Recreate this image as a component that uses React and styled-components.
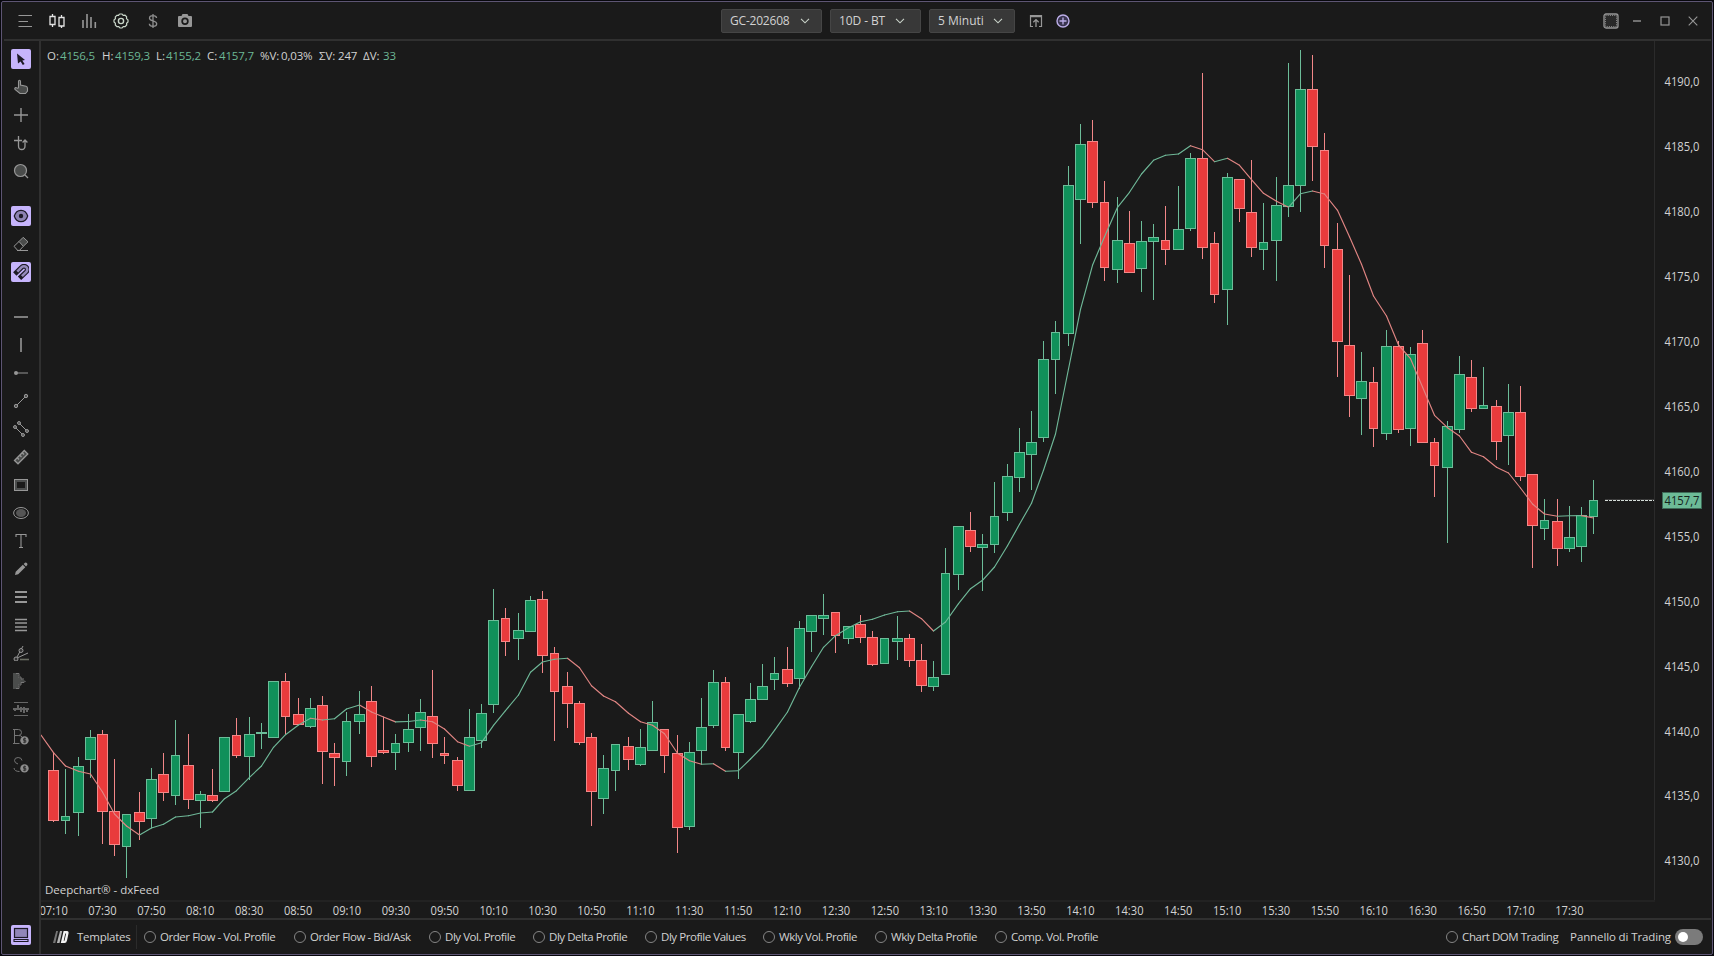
import React from "react";
import styled, { createGlobalStyle, css } from "styled-components";

const FONT = '"Open Sans", "Noto Sans", sans-serif';
const C = {
  bg: "#1a1a1a",
  line: "#303030",
  text: "#d2d2d2",
  icon: "#979797",
  accent: "#c6b4fc",
  up: "#10905a",
  upEdge: "#6cbd99",
  down: "#e93b3c",
  downEdge: "#f38788",
  maUp: "#6fb898",
  maDown: "#e08583",
};

const Global = createGlobalStyle`
  *, *::before, *::after { box-sizing: border-box; }
  html, body { margin: 0; padding: 0; background: #07070c; overflow: hidden; }
  button { font: inherit; color: inherit; border: 0; background: none; padding: 0; }
`;

const Window = styled.div`
  width: 1712px;
  height: 954px;
  margin: 1px 0 0 1px;
  border: 1px solid #5d5573;
  border-radius: 2px;
  background: ${C.bg};
  color: ${C.text};
  font-family: ${FONT};
  font-size: 11.5px;
  line-height: 16px;
  display: flex;
  flex-direction: column;
  white-space: nowrap;
`;

const TopBar = styled.header`
  flex: none;
  height: 39px;
  margin: 0 1px 0 2px;
  padding-left: 5px;
  border-bottom: 2px solid ${C.line};
  display: grid;
  grid-template-columns: 712px 1fr 112px;
  align-items: center;
`;
const ToolGroup = styled.div`
  display: flex;
  align-items: center;
`;
const TopButton = styled.button`
  width: ${(p) => p.$w || 32}px;
  height: 28px;
  display: flex;
  align-items: center;
  justify-content: center;
  color: ${(p) => p.$color || C.icon};
`;
const Select = styled.button`
  width: ${(p) => p.$w}px;
  height: 24px;
  margin-right: ${(p) => p.$gap ?? 8}px;
  padding: 0 ${(p) => p.$right}px 0 8px;
  background: #383838;
  border: 1px solid #454545;
  border-radius: 2px;
  font-size: 12px;
  display: flex;
  align-items: center;
  justify-content: space-between;
  color: ${C.text};
  letter-spacing: ${(p) => p.$track || 0}px;
`;

const Body = styled.div`
  flex: 1;
  min-height: 0;
  display: flex;
`;
const SideBar = styled.nav`
  flex: none;
  width: 39px;
  padding: 4px 0 5px;
  border-right: 2px solid ${C.line};
  display: flex;
  flex-direction: column;
  align-items: center;
`;
const SideButton = styled.button`
  flex: none;
  width: 20px;
  height: 20px;
  margin: 4px 0;
  border-radius: 2px;
  display: flex;
  align-items: center;
  justify-content: center;
  color: ${C.icon};
  ${(p) =>
    p.$active &&
    css`
      background: ${C.accent};
      color: #1d1a26;
    `}
`;
const SideGap = styled.div`
  flex: none;
  height: 17px;
`;
const Spacer = styled.div`
  flex: 1;
`;

const Main = styled.main`
  flex: 1;
  min-width: 0;
  display: flex;
  flex-direction: column;
`;
const ChartRow = styled.section`
  flex: none;
  height: 859px;
  display: flex;
`;
const Plot = styled.div`
  position: relative;
  width: 1614px;
  border-right: 1px solid #2b2b2b;
`;
const Drawing = styled.svg`
  display: block;
  overflow: hidden;
`;
const Readout = styled.div`
  position: absolute;
  top: 7px;
  left: 6px;
  display: flex;
`;
const Stat = styled.div`
  width: ${(p) => p.$w}px;
  display: flex;
`;
const StatName = styled.span`
  width: ${(p) => p.$w}px;
`;
const StatValue = styled.span`
  color: ${(p) => (p.$plain ? C.text : "#6cb795")};
  letter-spacing: -0.15px;
`;
const Feed = styled.div`
  position: absolute;
  left: 4px;
  bottom: 2px;
`;
const TimeAxis = styled.section`
  flex: none;
  height: 18px;
  width: 1614px;
  border-top: 2px solid #222;
`;

const Footer = styled.footer`
  flex: 1;
  margin-right: 1px;
  border-top: 2px solid ${C.line};
  display: flex;
  align-items: center;
  padding: 0 8px 0 12px;
`;
const Templates = styled.div`
  width: 84px;
  height: 24px;
  border-right: 1px solid #2b2b2b;
  display: flex;
  align-items: center;
  gap: 8px;
  letter-spacing: -0.27px;
`;
const Options = styled.div`
  flex: 1;
  display: flex;
  padding-left: 7px;
`;
const Option = styled.label`
  width: ${(p) => p.$w}px;
  display: flex;
  align-items: center;
  gap: 4px;
  letter-spacing: ${(p) => p.$track ?? -0.45}px;
`;
const Radio = styled.span`
  flex: none;
  width: 12px;
  height: 12px;
  border: 1px solid #858585;
  border-radius: 50%;
`;
const PanelSwitch = styled.label`
  display: flex;
  align-items: center;
  letter-spacing: -0.12px;
`;
const Toggle = styled.span`
  width: 28px;
  height: 16px;
  margin-left: 4px;
  padding: 3px;
  border-radius: 8px;
  background: #7b7b7b;
  &::before {
    content: "";
    display: block;
    width: 10px;
    height: 10px;
    border-radius: 50%;
    background: #fff;
  }
`;

const Icon = ({ size = 16, children }) => (
  <svg width={size} height={size} viewBox="0 0 16 16" fill="none" stroke="currentColor" strokeWidth="1">
    {children}
  </svg>
);
const Chevron = () => (
  <svg width="10" height="6" viewBox="0 0 10 6" fill="none" stroke="#c9d2c9" strokeWidth="1.1">
    <path d="M1 .8 5 4.800 9 .8" />
  </svg>
);

const F = { fill: "currentColor", stroke: "none" };
const DIM = "#4a4c4b";

const icons = {
  menu: <path d="M1.500 2.500H15M1.500 8.500H11M1.500 13.500H15" strokeWidth="1.2" />,
  candles: (
    <path d="M3.500 1V3M3.500 12V14M1 3.500H6V11.500H1ZM12.500 2V4M12.500 13V15M10 4.500H15V13H10Z" strokeWidth="1.3" />
  ),
  bars: <path d="M2 7V15M6 1V15M10 4V15M14.300 9V15" strokeWidth="1.6" />,
  gear: (
    <>
      <path d="M6 1.600 7 1H9L10.200 2.400 12 2.200 13.600 3.800 13.500 5.600 15 7V9L13.600 10.200 13.700 12 12.100 13.700 10.300 13.600 9 15H7L5.700 13.600 3.900 13.700 2.300 12 2.400 10.300 1 9V7L2.400 5.700 2.300 3.900 3.900 2.300 5.600 2.400Z" strokeWidth="1.2" />
      <circle cx="8" cy="8" r="2.6" strokeWidth="1.4" />
    </>
  ),
  dollar: (
    <path d="M8 1V15M11.600 5C11.300 3.300 10 2.700 8 2.700 5.800 2.700 4.500 3.700 4.500 5.200 4.500 8.600 11.700 7 11.700 10.700 11.700 12.400 10.100 13.300 8 13.300 5.800 13.300 4.500 12.500 4.300 10.700" strokeWidth="1.3" />
  ),
  camera: (
    <path {...F} fillRule="evenodd" d="M2 3H4.500L5.500 1H10.500L11.500 3H14Q15 3 15 4V13Q15 14 14 14H2Q1 14 1 13V4Q1 3 2 3ZM8 4.500A3.700 3.700 0 1 0 8 11.900 3.700 3.700 0 1 0 8 4.500ZM8 6.200A2 2 0 1 1 8 10.200 2 2 0 1 1 8 6.200Z" />
  ),
  popout: (
    <>
      <path d="M5 13.500H2.500V2.500H13.500V13.500H11" strokeWidth="1.2" />
      <path d="M2 3.500H14" strokeWidth="1.5" />
      <path d="M8 14V7M5.300 9.300 8 6.600 10.700 9.300" strokeWidth="1.3" />
    </>
  ),
  plusCircle: (
    <>
      <circle cx="8" cy="8" r="6" fill="#3a3550" strokeWidth="1.4" />
      <path d="M8 4.500V11.500M4.500 8H11.500" strokeWidth="1.3" />
    </>
  ),
  frame: (
    <>
      <rect x="1" y="1" width="14" height="14" rx="2" fill="#292929" strokeWidth="1.3" />
      <rect x="2.5" y="2.5" width="11" height="11" strokeDasharray="1 1.2" strokeWidth="0.9" />
    </>
  ),
  min: <path d="M4 8H12" strokeWidth="1.4" />,
  max: <rect x="4" y="4" width="8" height="8" strokeWidth="1.2" />,
  close: <path d="M3.700 3.700 12.300 12.300M12.300 3.700 3.700 12.300" strokeWidth="1.1" />,

  cursor: <path {...F} d="M4 2.500 12 9 9.300 9.400 11.600 13 9.800 14 7.600 10.400 5 12.400Z" />,
  hand: (
    <path d="M5.500 9V2.500Q5.500 1.200 6.500 1.200 7.500 1.200 7.500 2.500V6L13 7.300Q14.500 7.800 14.500 9.500V12L12.500 14.500H7L2 10.500Q1.300 9 2.700 8.500L5.500 9.500" fill={DIM} strokeWidth="1.1" />
  ),
  plus: <path d="M8 1V15M1 8H15" strokeWidth="1.4" />,
  crossMagnet: (
    <path d="M1 5.500H9M5.500 1V11Q5.500 14.500 8.700 14.500 12 14.500 12 11V5.500M9.600 7.500 12 5 14.400 7.500" strokeWidth="1.3" />
  ),
  lens: (
    <>
      <circle cx="7.5" cy="7.5" r="6" fill={DIM} strokeWidth="1.2" />
      <path d="M12 12 15 15" strokeWidth="1.3" />
    </>
  ),
  eye: (
    <>
      <path d="M1.300 8Q3 2.300 8 2.300 13 2.300 14.700 8 13 13.700 8 13.700 3 13.700 1.300 8Z" fill="#8d83b2" strokeWidth="1.2" />
      <circle cx="8" cy="8" r="2.2" {...F} />
    </>
  ),
  eraser: (
    <>
      <path d="M6 5.500 10.200 1.300 15 5.800 10.300 10.300Z" fill={DIM} />
      <path d="M6 5.500 1 10.300 4.700 14.400H6.500L10.300 10.300M4 14.500H15" />
    </>
  ),
  magnet: (
    <>
      <path d="M1.800 10 8.700 3.200A3.200 3.200 0 0 1 13.300 7.800L6.500 14.300" strokeWidth="4.8" />
      <path d="M4.300 7.600 8.700 3.200A3.200 3.200 0 0 1 13.300 7.800L8.900 12.100" stroke="#9489ba" strokeWidth="2.6" />
    </>
  ),
  hline: <path d="M1 8H15" strokeWidth="1.6" />,
  vline: <path d="M8 1V15" strokeWidth="1.6" />,
  ray: (
    <>
      <path d="M3 8H15" stroke="#6c6c6c" strokeWidth="1.5" />
      <circle cx="3" cy="8" r="2" {...F} />
    </>
  ),
  segment: (
    <>
      <path d="M4 12 12 4" />
      <circle cx="3" cy="13" r="1.7" fill="#555" />
      <circle cx="13" cy="3" r="1.7" fill="#555" />
    </>
  ),
  channel: (
    <g fill="#555">
      <path d="M2 6 10 14M6 2 14 10" />
      <circle cx="2" cy="6" r="1.5" />
      <circle cx="6" cy="2" r="1.5" />
      <circle cx="10" cy="14" r="1.5" />
      <circle cx="14" cy="10" r="1.5" />
    </g>
  ),
  ruler: (
    <path d="M1.500 11.500 11.300 1.500 14.800 5 5 14.800ZM4.500 9 6 10.500M7 6.500 8.500 8M9.500 4 11 5.500" fill={DIM} strokeWidth="1.3" />
  ),
  rect: (
    <>
      <rect x="3" y="4" width="10" height="8" stroke="#4c4e4e" strokeWidth="2" />
      <rect x="1.5" y="2.5" width="13" height="11" />
    </>
  ),
  ellipse: (
    <>
      <ellipse cx="8" cy="8" rx="7.4" ry="5.5" />
      <ellipse cx="8" cy="8" rx="5" ry="4" fill="#555" stroke="none" />
    </>
  ),
  type: <path d="M3 4V1.500H13V4M8 1.500V14.500M6 14.500H10" strokeWidth="1.1" />,
  pencil: (
    <path {...F} d="M2 14 2.700 10.800 9.800 3.700 12.300 6.200 5.200 13.300ZM10.600 3 12 1.700Q13 1.200 13.900 2.100 14.800 3 14.300 4L13 5.400Z" />
  ),
  lines3: <path d="M2 3H14M2 8H14M2 13H14" strokeWidth="1.9" />,
  lines4: <path d="M2 2.500H14M2 13.500H14M2 6H14M2 10H14" strokeWidth="1.5" />,
  fan: (
    <>
      <path d="M4 12 10 1M4 13 15 8" />
      <path d="M7 14.500H16" stroke="#6a6d62" strokeWidth="1.6" />
      <circle cx="3" cy="14" r="2" fill="#333" />
      <circle cx="8" cy="5.5" r="2" fill="#333" />
    </>
  ),
  profile: (
    <>
      <path d="M0 0H4L6 2.500 5 4 8 5.500 12.500 8 8 10.500 5 12 6 13.500 4 16H0Z" fill={DIM} stroke="none" />
      <path d="M3 .5H6V3M5 4H8V6H11M12.500 8 11 9.500H8V12H5M6 13V15.500H3" stroke="#777" />
    </>
  ),
  band: (
    <>
      <path d="M1 1.500H15M1 14.500H15" stroke="#666" />
      <path d="M0 8H16M2 7V10M5 4V9M8 6V11M11 6V12M14 8V11" stroke="#666" strokeWidth="2" />
    </>
  ),
};

const LetterCoin = ({ letter }) => (
  <svg width="16" height="16" viewBox="0 0 16 16" fill="none">
    {letter === "B" ? (
      <path d="M0 .500H5.500Q8.500 .500 8.500 3.500 8.500 6.500 5.500 6.500H1.500M1.500 .500V14.500M0 14.500H6.500M5.500 6.500Q8.500 6.500 9 8" stroke="#757575" />
    ) : (
      <path d="M9 3.500Q8.500 .500 5.200 .500 1.500 .500 1.500 3.500 1.500 6 5 7M1 11Q1.500 14.500 6.500 14.500" stroke="#757575" />
    )}
    <circle cx="11.5" cy="11.4" r="4.2" fill="#8c8c8c" />
    <path d="M13 9.700H10.500V11.400H12.800V13.200H10M11.700 8.500V14.200" stroke="#303030" strokeWidth="0.9" />
  </svg>
);

const sideGroups = [
  [["cursor", true], ["hand"], ["plus"], ["crossMagnet"], ["lens"]],
  [["eye", true], ["eraser"], ["magnet", true]],
  [
    ["hline"], ["vline"], ["ray"], ["segment"], ["channel"], ["ruler"], ["rect"], ["ellipse"],
    ["type"], ["pencil"], ["lines3"], ["lines4"], ["fan"], ["profile"], ["band"], ["B"], ["S"],
  ],
];

/* One entry per 5-minute bar from 07:10: direction, high, body top, body bottom, low. */
const bars = `d753,770,821,822 u769,816,821,834 u757,766,813,836 u730,737,760,778 d730,734,812,844
d759,811,845,856 u814,814,847,878 d792,812,822,840 u768,779,819,828 d753,774,793,801
u720,755,796,805 d734,765,800,809 u791,794,801,828 d769,795,801,802 u737,737,792,792
d718,735,756,758 u717,734,757,780 u723,732,734,749 u681,681,738,738 d673,681,717,735
d698,714,725,725 u698,708,727,728 d696,705,752,784 d743,753,758,786 u712,721,762,776
u691,714,722,734 d686,701,757,767 d717,750,753,754 u734,743,753,770 u714,729,743,752
u699,712,728,751 d670,716,744,758 d737,753,756,764 d757,760,786,791 u709,737,791,791
u704,713,741,748 u589,620,705,713 d608,618,642,656 u613,630,639,660 u596,600,632,632
d591,599,656,673 d647,653,692,741 d672,686,704,728 d701,703,743,745 d733,737,792,826
u755,768,799,814 u744,744,771,791 d737,746,760,770 u729,747,765,766 u701,722,751,751
d729,729,756,773 d735,753,828,853 u742,752,827,830 u698,727,751,764 u670,682,726,728
d677,682,748,751 u714,714,753,779 u683,699,722,723 u664,686,700,700 u657,673,680,690
d647,669,684,687 u621,628,679,689 u615,615,632,652 u594,615,619,635 d612,612,636,653
u626,626,639,644 d615,624,638,643 d631,637,665,666 u638,638,664,664 u616,638,642,660
d634,638,661,667 d644,660,686,692 u661,677,687,691 u548,573,675,675 u526,526,575,590
d512,530,547,552 u534,544,548,591 u482,516,545,553 u464,476,513,521 u428,452,478,492
u411,442,455,490 u341,359,438,442 u321,332,360,394 u166,185,334,346 u124,144,200,244
d120,141,203,208 d181,202,268,281 u197,240,270,283 d211,243,273,273 u221,241,269,292
u224,237,242,300 d206,240,250,265 u186,229,250,250 u153,158,229,231 d73,158,248,259
d232,243,295,303 u173,177,290,325 d179,179,209,222 d160,212,248,257 u203,242,250,270
u177,205,241,281 u63,185,207,217 u50,89,186,212 d55,89,147,181 d133,150,246,268
d223,249,342,377 d275,345,396,417 u352,381,399,435 d367,382,429,447 u330,346,434,440
d341,346,430,433 u347,354,429,446 d330,343,443,443 d438,442,466,497 u421,426,468,543
u356,374,430,433 d360,377,409,412 u367,405,409,409 d400,406,442,460 u384,412,436,465
d386,412,477,481 d474,474,526,568 u499,520,529,540 d499,521,549,566 u506,537,549,552
u507,515,547,562 u480,500,517,534`
  .split(/\s+/)
  .map((s) => [s[0] === "u", ...s.slice(1).split(",").map(Number)]);

const average = [
  752.7, 766, 771.3, 774, 792, 814, 826, 835, 828, 824.3, 817, 815.7, 813, 812, 798.7, 790.7, 777.3,
  766, 747.3, 734.7, 725, 718.3, 720, 718.7, 709, 705, 712, 717, 721.9, 721.5, 720, 721.7, 729, 741.7,
  746.3, 742.7, 725.3, 710.7, 695, 672.3, 662, 659.3, 658.3, 667.7, 685.7, 696, 701.7, 713.3, 721.7,
  725.3, 733.7, 753.3, 760.7, 764.3, 763.7, 771.3, 770.7, 759, 746.7, 730.3, 712, 687.3, 666.7, 647.3,
  635.7, 627.7, 621.7, 619.3, 615, 611.7, 611, 618.7, 631, 622, 603.7, 588.7, 580.3, 567, 545.7,
  524.3, 503.3, 470.3, 434, 369, 309.3, 265.3, 236.7, 207.3, 192.3, 174, 160.3, 155.3, 154, 145.7,
  149.7, 161.7, 158.3, 165.3, 179.7, 193.3, 201.3, 207.3, 193.7, 191, 194, 210.3, 236.7, 264.3, 296,
  316, 345, 358.7, 387, 415.3, 427.7, 436, 452.3, 456.7, 467.3, 473, 488, 504, 514, 516.3, 515.7,
  515.6, 518,
];

const barX = (i) => 53.618 + 12.2239 * i;

const Candle = ({ i, bar: [up, high, top, bottom, low] }) => {
  const exact = barX(i);
  const cx = Math.floor(exact);
  const half = exact - cx >= 0.775 ? 4 : 5;
  const edge = up ? C.upEdge : C.downEdge;
  return (
    <g shapeRendering="crispEdges">
      <rect x={cx} y={high} width="1" height={low - high} fill={edge} />
      <rect x={cx - half} y={top} width={half * 2 + 1} height={bottom - top} fill={edge} />
      {bottom - top > 2 && (
        <rect x={cx - half + 1} y={top + 1} width={half * 2 - 1} height={bottom - top - 2} fill={up ? C.up : C.down} />
      )}
    </g>
  );
};

const Average = () => {
  const pts = [[41, 735], ...average.map((y, i) => [Math.floor(barX(i)) + 0.5, y])];
  return (
    <g strokeWidth="1.15" strokeLinecap="round">
      {pts.slice(1).map(([x, y], i) => (
        <line key={i} x1={pts[i][0]} y1={pts[i][1]} x2={x} y2={y} stroke={y < pts[i][1] ? C.maUp : C.maDown} />
      ))}
    </g>
  );
};

const prices = Array.from({ length: 13 }, (_, k) => 4190 - 5 * k);
const times = Array.from({ length: 32 }, (_, k) => {
  const m = 430 + 20 * k;
  return `${String(Math.floor(m / 60)).padStart(2, "0")}:${String(m % 60).padStart(2, "0")}`;
});

const AxisLabel = ({ x, y, w, children, fill = C.text }) => (
  <text x={x} y={y} textLength={w} lengthAdjust="spacingAndGlyphs" fontFamily={FONT} fontSize="11.8" fill={fill}>
    {children}
  </text>
);

const stats = [
  ["O:", "4156,5", 55, 13],
  ["H:", "4159,3", 54, 13],
  ["L:", "4155,2", 51, 10],
  ["C:", "4157,7", 53, 12],
  ["%V:", "0,03%", 59, 21, true],
  ["ΣV:", "247", 44, 19, true],
  ["ΔV:", "33", 34, 20],
];

const options = [
  ["Order Flow - Vol. Profile", 150],
  ["Order Flow - Bid/Ask", 135],
  ["Dly Vol. Profile", 104],
  ["Dly Delta Profile", 112],
  ["Dly Profile Values", 118],
  ["Wkly Vol. Profile", 112],
  ["Wkly Delta Profile", 120],
  ["Comp. Vol. Profile", 110],
];

export default function App() {
  return (
    <>
      <Global />
      <Window>
        <TopBar>
          <ToolGroup>
            <TopButton><Icon>{icons.menu}</Icon></TopButton>
            <TopButton $color="#e4e4e4"><Icon>{icons.candles}</Icon></TopButton>
            <TopButton><Icon>{icons.bars}</Icon></TopButton>
            <TopButton $color="#c9d6c9"><Icon>{icons.gear}</Icon></TopButton>
            <TopButton $color="#8f8f8f"><Icon>{icons.dollar}</Icon></TopButton>
            <TopButton><Icon>{icons.camera}</Icon></TopButton>
          </ToolGroup>
          <ToolGroup>
            <Select $w={101} $right={11} $track={-0.2}>GC-202608<Chevron /></Select>
            <Select $w={91} $right={15} $track={-0.1}>10D - BT<Chevron /></Select>
            <Select $w={86} $right={11} $gap={7}>5 Minuti<Chevron /></Select>
            <TopButton $w={27}><Icon>{icons.popout}</Icon></TopButton>
            <TopButton $w={28} $color="#bcaee8"><Icon>{icons.plusCircle}</Icon></TopButton>
          </ToolGroup>
          <ToolGroup>
            {["frame", "min", "max", "close"].map((n) => (
              <TopButton key={n} $w={n === "frame" ? 24 : 28}><Icon>{icons[n]}</Icon></TopButton>
            ))}
          </ToolGroup>
        </TopBar>
        <Body>
          <SideBar>
            {sideGroups.map((group, g) => (
              <React.Fragment key={g}>
                {g > 0 && <SideGap />}
                {group.map(([name, active]) => (
                  <SideButton key={name} $active={active}>
                    {icons[name] ? <Icon>{icons[name]}</Icon> : <LetterCoin letter={name} />}
                  </SideButton>
                ))}
              </React.Fragment>
            ))}
            <Spacer />
            <SideButton $active>
              <Icon>
                <rect x="1.5" y="1.5" width="13" height="9" fill="#9186b8" strokeWidth="1.2" />
                <path d="M1 12.500H15V14.500H1Z" strokeWidth="1.1" />
              </Icon>
            </SideButton>
          </SideBar>
          <Main>
            <ChartRow>
              <Plot>
                <Drawing width="1613" height="859" viewBox="41 41 1613 859">
                  {bars.map((bar, i) => <Candle key={i} i={i} bar={bar} />)}
                  <Average />
                  <path d="M1605 499.500H1654" stroke="#3c3c3c" />
                  <path d="M1605 500.500H1654" stroke="#d4dcd8" strokeDasharray="3 1" />
                </Drawing>
                <Readout>
                  {stats.map(([name, value, w, nameW, plain]) => (
                    <Stat key={name} $w={w}>
                      <StatName $w={nameW}>{name}</StatName>
                      <StatValue $plain={plain}>{value}</StatValue>
                    </Stat>
                  ))}
                </Readout>
                <Feed>Deepchart® - dxFeed</Feed>
              </Plot>
              <Drawing width="55" height="859" viewBox="1655 41 55 859">
                {prices.map((p, k) => (
                  <AxisLabel key={p} x={1664.5} y={86 + 64.95 * k} w={35}>{`${p},0`}</AxisLabel>
                ))}
                <rect x="1662.5" y="492.5" width="39" height="16" fill="#6dbb97" stroke="#3d6b57" />
                <AxisLabel x={1664.5} y={504.9} w={35} fill="#14231c">4157,7</AxisLabel>
              </Drawing>
            </ChartRow>
            <TimeAxis>
              <Drawing width="1613" height="16" viewBox="41 902 1613 16">
                {times.map((t, k) => (
                  <AxisLabel key={t} x={barX(4 * k) - 14.2} y={915} w={28.4}>{t}</AxisLabel>
                ))}
              </Drawing>
            </TimeAxis>
            <Footer>
              <Templates>
                <svg width="16" height="12" viewBox="0 0 16 12">
                  <path d="M3.200 0H5L2.300 12H0Z" fill="#777" />
                  <path d="M7 0H9.200L6.500 12H3.900Z" fill="#b5b5b5" />
                  <path d="M10.600 0H14Q16 0 15.500 2.500L14 9.500Q13.500 12 11.500 12H7.800ZM12.300 2.500 10.700 9.800H11.500L13.100 2.500Z" fill="#f4f4f4" />
                </svg>
                Templates
              </Templates>
              <Options>
                {options.map(([name, w]) => (
                  <Option key={name} $w={w}><Radio />{name}</Option>
                ))}
              </Options>
              <Option $w={124}><Radio />Chart DOM Trading</Option>
              <PanelSwitch>
                Pannello di Trading
                <Toggle />
              </PanelSwitch>
            </Footer>
          </Main>
        </Body>
      </Window>
    </>
  );
}
